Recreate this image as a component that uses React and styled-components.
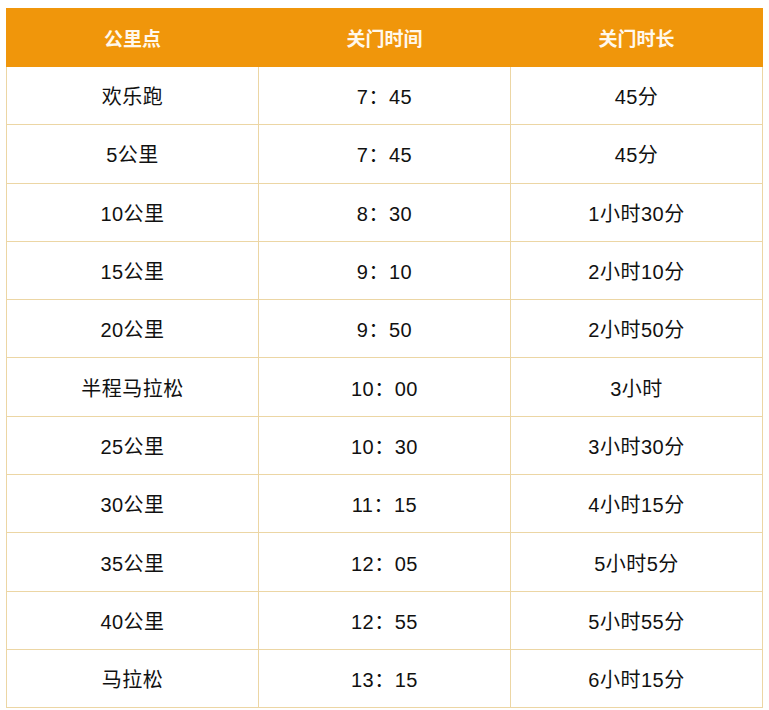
import styled, { createGlobalStyle } from "styled-components";

const GlobalStyle = createGlobalStyle`
  body {
    margin: 0;
    background: #fff;
    font-family: "Liberation Sans", "Noto Sans CJK SC", sans-serif;
  }
`;

const Wrap = styled.div`
  padding: 8px 6px 0 6px;
`;

const Table = styled.table`
  width: 757px;
  border-collapse: collapse;
  table-layout: fixed;
`;

const HeadCell = styled.th`
  height: 57px;
  padding: 0;
  background: #f0960b;
  color: #fff8ec;
  font-size: 19px;
  font-weight: 700;
  text-align: center;
  border: 1px solid #f0960b;
`;

const Cell = styled.td`
  height: 57.3px;
  padding: 0;
  color: #111;
  font-size: 20px;
  letter-spacing: 0.5px;
  text-align: center;
  border: 1px solid #ecd6a4;
`;

const rows = [
  ["欢乐跑", "7：45", "45分"],
  ["5公里", "7：45", "45分"],
  ["10公里", "8：30", "1小时30分"],
  ["15公里", "9：10", "2小时10分"],
  ["20公里", "9：50", "2小时50分"],
  ["半程马拉松", "10：00", "3小时"],
  ["25公里", "10：30", "3小时30分"],
  ["30公里", "11：15", "4小时15分"],
  ["35公里", "12：05", "5小时5分"],
  ["40公里", "12：55", "5小时55分"],
  ["马拉松", "13：15", "6小时15分"],
];

export default function App() {
  return (
    <Wrap>
      <GlobalStyle />
      <Table>
        <thead>
          <tr>
            <HeadCell>公里点</HeadCell>
            <HeadCell>关门时间</HeadCell>
            <HeadCell>关门时长</HeadCell>
          </tr>
        </thead>
        <tbody>
          {rows.map((r) => (
            <tr key={r[0]}>
              {r.map((c, i) => (
                <Cell key={i}>{c}</Cell>
              ))}
            </tr>
          ))}
        </tbody>
      </Table>
    </Wrap>
  );
}
